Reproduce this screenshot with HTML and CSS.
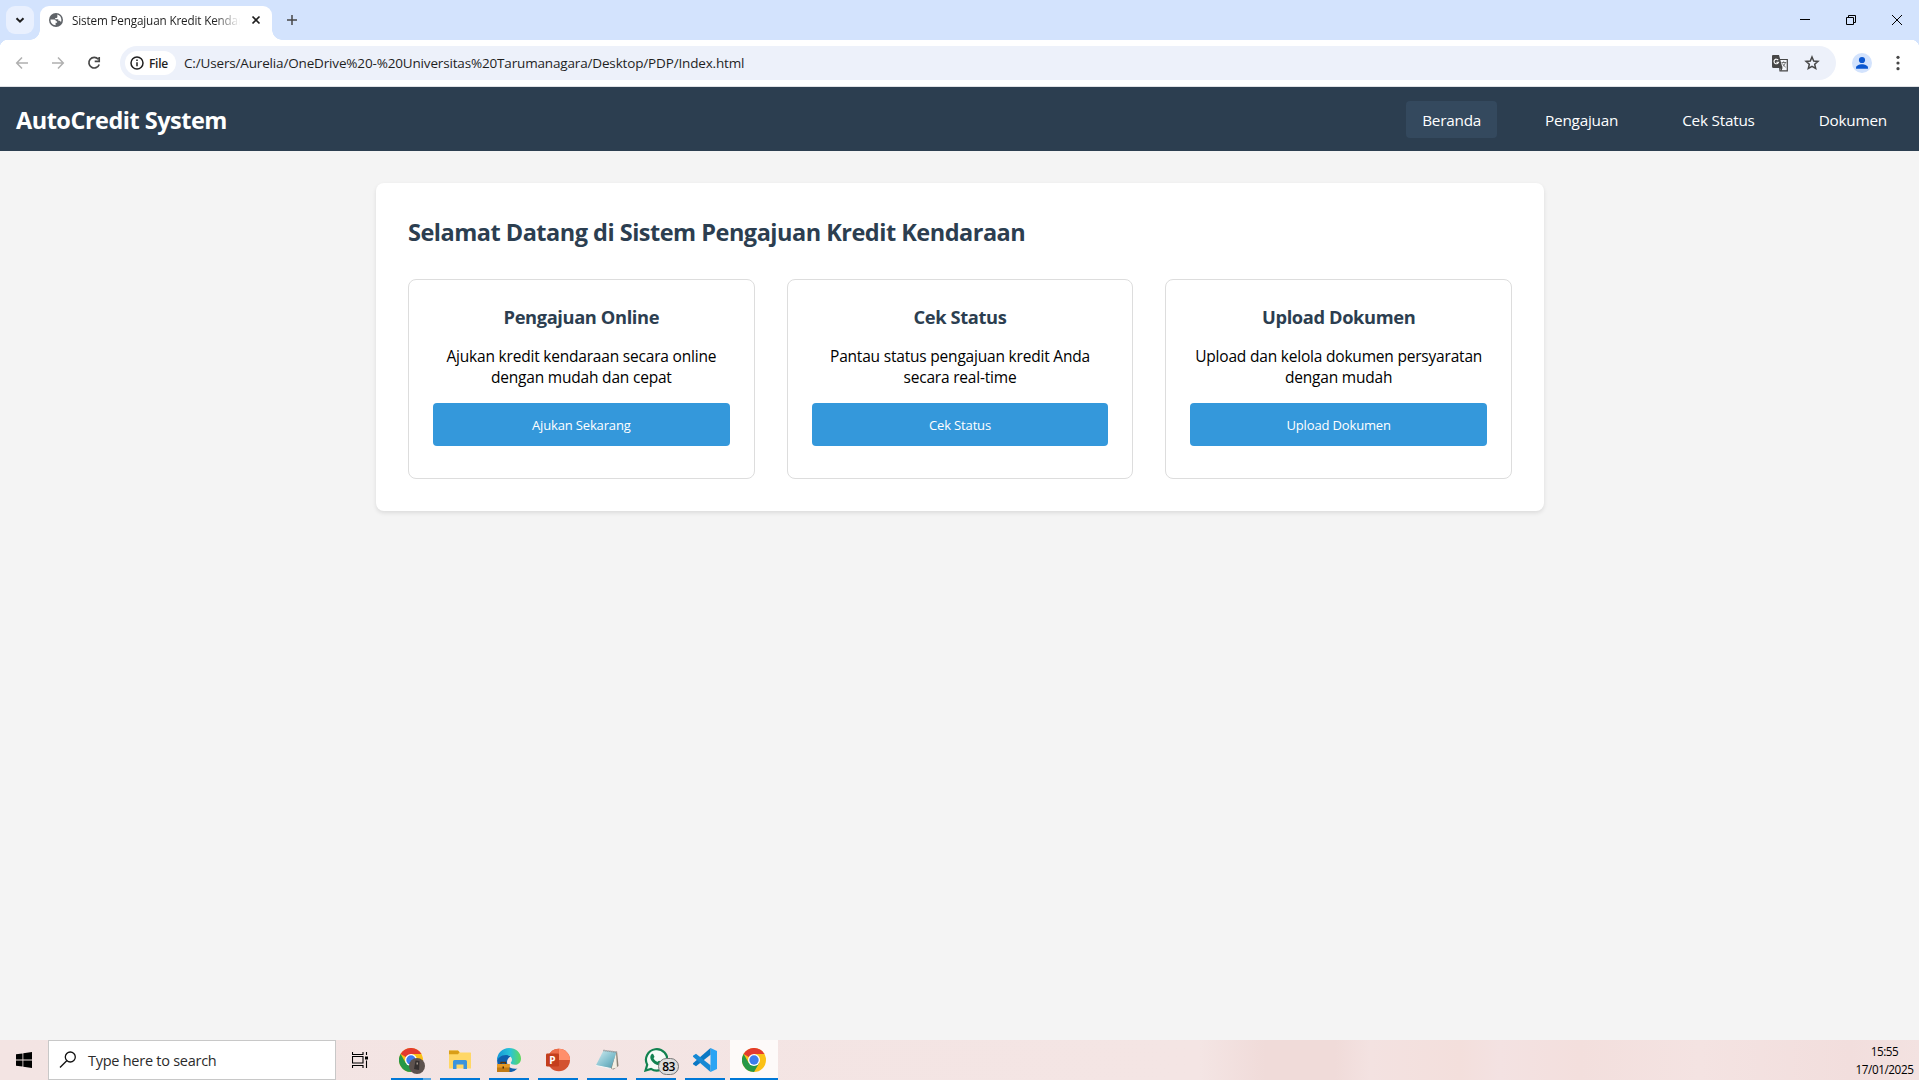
FILE: index.html
```html
<!DOCTYPE html>
<html lang="id">
<head>
<meta charset="utf-8">
<title>Sistem Pengajuan Kredit Kendaraan</title>
<link rel="stylesheet" href="styles.css">
</head>
<body>
<div class="tabstrip">
  <button class="tab-search" aria-label="Search tabs"><svg width="28" height="28" viewBox="0 0 28 28"><path d="M10.5 12.2l3.5 3.5 3.5-3.5" fill="none" stroke="#1f1f1f" stroke-width="2"/></svg></button>
  <div class="tab">
    <svg class="globe" width="14" height="14" viewBox="0 0 14 14"><circle cx="7" cy="7" r="7" fill="#5f6368"/><path d="M1.5 6.6h3.8c1 0 1.5.8 1.5 1.7h1.3v1.4H6.6v2.6C3.6 12.3 1.4 9.8 1.5 6.6zM8.3 1.6c2.4.5 4.1 2.7 4.1 5.3 0 .9-.2 1.6-.5 2.3-.4-.9-1-1.4-1.9-1.4H9.300V6.300H6.200V4.900h1.400c.5 0 .8-.3.8-.8z" fill="#fff"/></svg>
    <span class="tab-title">Sistem Pengajuan Kredit Kendaraan</span>
    <svg class="tab-close" width="10" height="10" viewBox="0 0 10 10"><path d="M1.5 1.5l7 7M8.5 1.5l-7 7" stroke="#1f1f1f" stroke-width="1.7"/></svg>
  </div>
  <svg class="new-tab" width="10" height="10" viewBox="0 0 10 10"><path d="M5 0v10M0 5h10" stroke="#474747" stroke-width="1.5"/></svg>
  <div class="window-controls">
    <svg width="46" height="40" viewBox="0 0 46 40"><path d="M19 19.500h10" stroke="#000"/></svg>
    <svg width="46" height="40" viewBox="0 0 46 40"><path d="M19.500 17.500h7v7h-7zM21.500 17.500v-2h7v7h-2" fill="none" stroke="#000"/></svg>
    <svg width="46" height="40" viewBox="0 0 46 40"><path d="M19 15l10 10M29 15l-10 10" stroke="#000"/></svg>
  </div>
</div>
<div class="toolbar">
  <div class="nav-buttons">
    <svg width="20" height="20" viewBox="0 0 20 20" fill="none" stroke="#b0b0b0" stroke-width="1.5"><path d="M16 10H5M10 4.500L4.700 10l5.300 5.500"/></svg>
    <svg width="20" height="20" viewBox="0 0 20 20" fill="none" stroke="#b0b0b0" stroke-width="1.5"><path d="M4 10h11M10 4.500l5.300 5.500-5.300 5.500"/></svg>
    <svg width="20" height="20" viewBox="0 0 20 20" fill="none" stroke="#474747" stroke-width="1.7"><path d="M14.300 6.300A5.300 5.300 0 1 0 15.200 11.500M15.200 4v4.300h-4.500"/></svg>
  </div>
  <div class="omnibox">
    <span class="chip"><svg width="14" height="14" viewBox="0 0 14 14"><circle cx="7" cy="7" r="6" fill="none" stroke="#1f1f1f" stroke-width="1.5"/><path d="M7 6.200v4M7 3.500v1.500" stroke="#1f1f1f" stroke-width="1.5"/></svg>File</span>
    <span class="url">C:/Users/Aurelia/OneDrive%20-%20Universitas%20Tarumanagara/Desktop/PDP/Index.html</span>
    <svg class="translate" width="17" height="17" viewBox="0 0 17 17"><path d="M7 4.500h8.300v11.300H8z" fill="#f5f7fb" stroke="#474747" stroke-width="1.2"/><path d="M1 0h6l3.500 13H1.500A1.500 1.500 0 0 1 0 11.500V1A1 1 0 0 1 1 0zM8 13h2.500l-1 3z" fill="#474747"/><path d="M6.200 5.100a2.300 2.300 0 1 0 .3 2.200H4.300" fill="none" stroke="#fff" stroke-width="1.1"/><path d="M9.500 7.500h4.800M11.700 6.300v1.200M13.300 7.500c-.3 1.800-1.300 3-2.600 4M10.500 8.500c.8 1.700 1.800 2.700 3.200 3.700" fill="none" stroke="#666" stroke-width=".9"/></svg>
    <svg class="star" width="16" height="16" viewBox="0 0 16 16"><path d="M8 2l1.700 4 4.300.4-3.300 2.900 1 4.200L8 11.300l-3.700 2.200 1-4.200L2 6.400 6.300 6z" fill="none" stroke="#474747" stroke-width="1.5"/></svg>
  </div>
  <svg class="avatar" width="20" height="20" viewBox="0 0 20 20"><circle cx="10" cy="10" r="10" fill="#d3e3fd"/><circle cx="10" cy="7" r="3.1" fill="#0b57d0"/><path d="M4 15.800v-1.300c0-2 3.300-3.300 6-3.300s6 1.300 6 3.300v1.300z" fill="#0b57d0"/></svg>
  <svg class="menu" width="4" height="16" viewBox="0 0 4 16" fill="#474747"><circle cx="2" cy="2.300" r="1.600"/><circle cx="2" cy="8" r="1.600"/><circle cx="2" cy="13.700" r="1.600"/></svg>
</div>

<div class="page">
  <header class="site-header">
    <div class="logo">AutoCredit System</div>
    <nav class="site-nav">
      <a class="active">Beranda</a><a>Pengajuan</a><a>Cek Status</a><a>Dokumen</a>
    </nav>
  </header>
  <main class="panel">
    <h2>Selamat Datang di Sistem Pengajuan Kredit Kendaraan</h2>
    <div class="cards">
      <section class="card"><h3>Pengajuan Online</h3><p>Ajukan kredit kendaraan secara online<br>dengan mudah dan cepat</p><button class="btn">Ajukan Sekarang</button></section>
      <section class="card"><h3>Cek Status</h3><p>Pantau status pengajuan kredit Anda<br>secara real-time</p><button class="btn">Cek Status</button></section>
      <section class="card"><h3>Upload Dokumen</h3><p>Upload dan kelola dokumen persyaratan<br>dengan mudah</p><button class="btn">Upload Dokumen</button></section>
    </div>
  </main>
</div>

<div class="taskbar">
  <div class="start"><svg width="16" height="16" viewBox="0 0 16 16"><path d="M0 2.300l6.500-.9v6.200H0zM7.300 1.300L16 0v7.600H7.300zM0 8.400h6.500v6.200L0 13.700zM7.300 8.400H16V16l-8.700-1.300z"/></svg></div>
  <div class="search"><svg width="18" height="18" viewBox="0 0 18 18" fill="none" stroke="#111" stroke-width="1.3"><circle cx="11.300" cy="6" r="5"/><path d="M7.700 9.700L1 16.500"/></svg><span>Type here to search</span></div>
  <div class="taskview"><svg width="17" height="16" viewBox="0 0 17 16" fill="none" stroke="#000" stroke-width="1.1"><path d="M.5 0v2.500h10.500V0M.5 16v-2.500h10.500V16M.5 4.500h10.500v6.500H.5zM14.500 0v3M14.500 8.500V16"/><path d="M13 4.500h3v3h-3z" fill="#000" stroke="none"/></svg></div>
  <div class="apps">
    <div class="app grouped">
      <svg width="26" height="26" viewBox="0 0 26 26"><circle cx="12" cy="12" r="12" fill="#fbc116"/><path d="M1.600 6A12 12 0 0 1 22.400 6H12v6z" fill="#e33b2e"/><path d="M1.600 6A12 12 0 0 0 12 24l5.200-9L12 12 6.800 15z" fill="#279847"/><circle cx="12" cy="12" r="6" fill="#fff"/><circle cx="12" cy="12" r="4.700" fill="#3d7ded"/><circle cx="18" cy="18" r="8" fill="#5d524e"/><path d="M16.500 12.500l4 .5-.5 9-5-1z" fill="#35302f"/><path d="M17.500 14.500h1.500v2h-1.500z" fill="#a3978c"/></svg>
    </div>
    <div class="app">
      <svg width="24" height="24" viewBox="0 0 24 24"><path d="M1 2.500h9l2 2h10.500A.5.5 0 0 1 23 5v15.500H1z" fill="#ffd766"/><path d="M1 2.500h9l1.500 1.800-1.500 2H1z" fill="#d99e17"/><path d="M5 21v-7.500A1.500 1.500 0 0 1 6.500 12h11a1.500 1.500 0 0 1 1.500 1.500V21h-3.500v-4.500h-7V21z" fill="#3b94dc"/></svg>
    </div>
    <div class="app">
      <svg width="24" height="24" viewBox="0 0 24 24"><defs><linearGradient id="edgeTop" x1="0" x2="1"><stop offset="0" stop-color="#1597d8"/><stop offset=".55" stop-color="#2ac3d8"/><stop offset="1" stop-color="#5fd95a"/></linearGradient></defs><path d="M0 12A12 12 0 0 0 20.500 20.500c-6 1-10.500-2-10.500-6.500 0-3 2-5 4-5.500L9 6C4 6 1 8.500 0 12z" fill="#105fae"/><path d="M12 0c7 0 12 4.700 12 10.500 0 4-2.700 6.300-6 6.300-2.800 0-4.200-1-4.200-2 0-.7 1.200-1.300 1.200-3C15 9 12.500 7 9 7 4 7 0 10.300 0 14.500V12A12 12 0 0 1 12 0z" fill="url(#edgeTop)"/><path d="M0 16h12.500v8H0z" fill="#c27a13"/><path d="M0 16h12.500v3.500H0z" fill="#e69a25"/><path d="M4 16v-1.500h4.500V16" fill="none" stroke="#5d3408" stroke-width="1.3"/><path d="M5.500 18.500h1.500v2H5.500z" fill="#4a2a08"/></svg>
    </div>
    <div class="app">
      <svg width="24" height="24" viewBox="0 0 24 24"><circle cx="12.800" cy="12" r="11.200" fill="#d35230"/><path d="M12.800.8A11.200 11.200 0 0 1 24 12H12.800z" fill="#ff8f6b"/><path d="M12.800.8A11.200 11.200 0 0 0 1.600 12h11.200z" fill="#ed6c47"/><rect y="5.500" width="13" height="13" rx="1.200" fill="#c43e1c"/><text x="6.500" y="15.500" class="ppt-letter">P</text></svg>
    </div>
    <div class="app">
      <svg width="24" height="24" viewBox="0 0 24 24"><defs><linearGradient id="pad" x2="1" y2="1"><stop offset="0" stop-color="#d4eef2"/><stop offset=".6" stop-color="#7dbccb"/><stop offset="1" stop-color="#5294a5"/></linearGradient></defs><path d="M22 3l1.500 15-5 3.500-4-1z" fill="#8b8174"/><path d="M21 4l1 15.500-5.500 1.500z" fill="#f4efe4"/><path d="M8.500 2.500L21.500 4 16 20.500.8 17.500z" fill="url(#pad)"/><path d="M8.500 2.500l13 1.500" stroke="#777" stroke-width="1.5" stroke-dasharray="1 1"/><path d="M.8 17.500L16 20.500" stroke="#f7f7f7"/></svg>
    </div>
    <div class="app">
      <svg width="24" height="24" viewBox="0 0 24 24"><path d="M1.500 22.500l1.700-5.700A10.700 10.700 0 1 1 7 20.900z" fill="#f6fbf7" stroke="#128250" stroke-width="2.2"/><path d="M7.500 6.300c.6-.6 1.500-.6 1.900.1l1 2c.3.6-.9 1.600-.8 2 .8 1.500 2 2.700 3.700 3.400.5.2 1.300-1.300 1.900-1l2.100 1.100c.6.3.4 1.200 0 1.800-1 1.500-2.900 1.700-4.700 1-3-1.200-5-3.200-6-5.700-.6-1.800-.3-3.500.9-4.700z" fill="#128250"/></svg>
      <span class="badge">83</span>
    </div>
    <div class="app">
      <svg width="24" height="24" viewBox="0 0 24 24"><path d="M17.500 0L24 3v18l-6.500 3z" fill="#2aa4f4"/><path d="M17.500 0v6.700L3 18.200 0 16.200v-1z" fill="#0b78c4"/><path d="M17.500 24v-6.700L3 5.800 0 7.800v1z" fill="#1689d4"/></svg>
    </div>
    <div class="app current">
      <svg width="24" height="24" viewBox="0 0 24 24"><circle cx="12" cy="12" r="12" fill="#fbc116"/><path d="M1.600 6A12 12 0 0 1 22.400 6H12v6z" fill="#e33b2e"/><path d="M1.600 6A12 12 0 0 0 12 24l5.200-9L12 12 6.800 15z" fill="#279847"/><circle cx="12" cy="12" r="6" fill="#fff"/><circle cx="12" cy="12" r="4.700" fill="#3d7ded"/></svg>
    </div>
  </div>
  <div class="clock"><span>15:55</span><span>17/01/2025</span></div>
</div>
</body>
</html>
```
FILE: styles.css
```css
* { box-sizing: border-box; }
body {
  margin: 0;
  height: 1080px;
  overflow: hidden;
  display: flex;
  flex-direction: column;
  font-family: "Open Sans", "Noto Sans", sans-serif;
  font-size: 16px;
  background: #f4f4f4;
}
svg { display: block; flex: none; }
button { border: 0; padding: 0; font-family: inherit; }

/* browser window */
.tabstrip { height: 40px; flex: none; display: flex; background: #d3e3fd; padding-left: 6px; }
.tab-search { width: 28px; height: 28px; margin-top: 6px; border-radius: 9px; background: #e9f0fe; }
.tab {
  position: relative;
  width: 232px; height: 34px; margin: 6px 0 0 6px; padding: 0 11px 6px 9px;
  border-radius: 9px 9px 0 0; background: #fff;
  display: flex; align-items: center;
}
.tab::before, .tab::after { content: ""; position: absolute; bottom: 0; width: 10px; height: 10px; }
.tab::before { left: -10px; background: radial-gradient(circle at 0 0, transparent 9.5px, #fff 10px); }
.tab::after { right: -10px; background: radial-gradient(circle at 100% 0, transparent 9.5px, #fff 10px); }
.tab-title {
  width: 168px; margin-left: 9px; overflow: hidden; white-space: nowrap;
  font-size: 11.7px; line-height: 20px; letter-spacing: -.15px; color: #1f1f1f;
  -webkit-mask-image: linear-gradient(90deg, #000 142px, transparent 168px);
  mask-image: linear-gradient(90deg, #000 142px, transparent 168px);
}
.tab-close { margin-left: auto; }
.new-tab { margin: 15px 0 0 15px; }
.window-controls { display: flex; margin-left: auto; }
.toolbar {
  height: 47px; flex: none; display: flex; align-items: center; padding: 0 19px 0 12px;
  border-bottom: 1px solid #dfe1e5;
  background:
    radial-gradient(circle at 8px 8px, #fff 8px, #d3e3fd 8.5px) 0 0 / 8px 8px no-repeat,
    radial-gradient(circle at 0 8px, #fff 8px, #d3e3fd 8.5px) 100% 0 / 8px 8px no-repeat,
    #fff;
}
.nav-buttons { display: flex; gap: 16px; width: 108px; }
.omnibox {
  width: 1716px; height: 34px; border-radius: 17px; background: #edf1fa;
  display: flex; align-items: center; padding: 0 16px 0 5px;
}
.chip {
  height: 24px; width: 51px; border-radius: 12px; background: #fff; padding-left: 5px;
  display: flex; align-items: center; gap: 5px;
  font-size: 12px; font-weight: 600; letter-spacing: -.3px; color: #1f1f1f;
}
.url { margin-left: 8px; font-size: 13.5px; line-height: 20px; letter-spacing: -.16px; color: #1f1f1f; }
.translate { margin-left: auto; }
.star { margin-left: 15px; }
.avatar { margin-left: 16px; }
.menu { margin-left: auto; }

/* page */
.page { flex: 1; min-height: 0; background: #f4f4f4; }
.site-header {
  height: 64px; padding: 0 16px; background: #2c3e50; color: #fff;
  display: flex; align-items: center; justify-content: space-between;
}
.logo { padding-top: 2px; font-size: 23.5px; font-weight: 700; line-height: 32px; letter-spacing: -.5px; }
.site-nav { display: flex; gap: 32px; }
.site-nav a {
  height: 37px; padding: 9px 16px 7px; border-radius: 4px; white-space: nowrap;
  font-size: 15.3px; line-height: 21px; letter-spacing: -.22px;
}
.site-nav .active { background: #34495e; }
.panel {
  width: 1168px; height: 328px; margin: 32px auto 0; padding: 33px 31.5px 32px 32.5px;
  background: #fff; border-radius: 8px; box-shadow: 0 2px 4px rgba(0, 0, 0, .1);
}
h2 { margin: 0 0 31px; font-size: 23.5px; line-height: 32px; letter-spacing: -.5px; color: #2c3e50; }
.cards { display: grid; grid-template-columns: repeat(3, minmax(0, 1fr)); gap: 32px; }
.card { height: 200px; padding: 24px; border: 1px solid #ddd; border-radius: 8px; text-align: center; }
h3 { margin: 0 0 17px; font-size: 18.3px; line-height: 25px; letter-spacing: -.38px; color: #2c3e50; }
p { margin: 0 0 15px; font-size: 15.5px; line-height: 21px; letter-spacing: -.2px; white-space: nowrap; color: #000; }
.btn {
  width: 100%; height: 43px; border-radius: 4px; background: #3498db; color: #fff;
  font-size: 13px; letter-spacing: -.15px;
}

/* taskbar */
.taskbar {
  height: 40px; flex: none; display: flex;
  background: linear-gradient(90deg, #f3e4e3 0, #f4e5e4 1200px, #f0dbd9 1265px, #f0dbd9 1335px, #f3e2e1 1370px, #f3dfdc 1460px, #f3e2e2 1500px, #f3dfdd 1580px, #f4e3e2 1700px, #f2dedd 1850px, #f3e2e1);
}
.start { width: 48px; padding: 12px 16px; }
.search {
  width: 288px; border: 1px solid #c8c8c8; background: #fff; color: #2b2b2b;
  display: flex; align-items: center; padding-left: 10px; gap: 11px;
  font-size: 14.5px; letter-spacing: -.26px;
}
.taskview { width: 51px; padding: 12px 0 0 16px; }
.apps { display: flex; gap: 1px; }
.app { position: relative; width: 48px; height: 40px; display: flex; justify-content: center; padding-top: 8px; }
.app::after { content: ""; position: absolute; left: 4px; bottom: 0; width: 40px; height: 2px; background: #0078d7; }
.grouped svg { margin-left: 2px; }
.grouped::after { background: linear-gradient(90deg, #0078d7 32px, #5aa9e6 32px); }
.current { background: #fdfaf9; }
.current::after { left: 0; width: 48px; }
.ppt-letter { font: 700 10px "Open Sans", sans-serif; fill: #fff; text-anchor: middle; }
.badge {
  position: absolute; left: 26px; top: 18px; width: 21px; height: 17px; border-radius: 9px;
  border: 1px solid #777; background: #ddd; color: #000;
  font-size: 12px; font-weight: 600; line-height: 15px; letter-spacing: -.6px; text-align: center;
}
.clock {
  margin-left: auto; width: 69px; display: flex; flex-direction: column; align-items: center;
  padding-top: 2px; font-size: 11.7px; line-height: 18px; letter-spacing: -.42px; color: #000;
}
```
